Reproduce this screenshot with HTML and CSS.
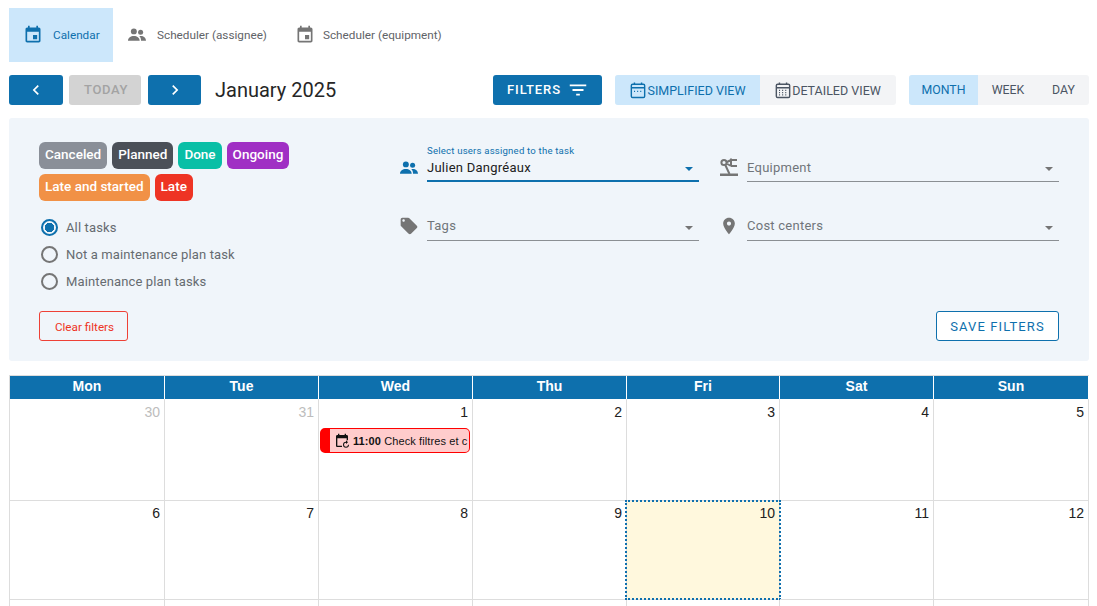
FILE: index.html
```html
<!DOCTYPE html>
<html lang="en">
<head>
<meta charset="utf-8">
<title>Calendar</title>
<link rel="stylesheet" href="styles.css">
</head>
<body>
<nav class="tabs">
  <a class="tab active"><svg class="tab-icon" viewBox="0 0 24 24"><path d="M19 3h-1V1h-2v2H8V1H6v2H5c-1.100 0-2 .9-2 2v14c0 1.100.9 2 2 2h14c1.100 0 2-.9 2-2V5c0-1.100-.9-2-2-2zm0 16H5V8h14v11zm-7-7h5v5h-5z"/></svg><span>Calendar</span></a>
  <a class="tab second"><svg class="tab-icon" viewBox="0 0 20 20"><circle cx="6.500" cy="6" r="3.300"/><circle cx="14" cy="7" r="2.800"/><path d="M0 16.500c0-3.500 3-5.500 6.500-5.500s6.500 2 6.500 5.500zM14.500 16.500c0-2.200-.6-4-2-5 3.500-1 7.500.8 7.500 5z"/></svg><span>Scheduler (assignee)</span></a>
  <a class="tab third"><svg class="tab-icon" viewBox="0 0 24 24"><path d="M19 3h-1V1h-2v2H8V1H6v2H5c-1.100 0-2 .9-2 2v14c0 1.100.9 2 2 2h14c1.100 0 2-.9 2-2V5c0-1.100-.9-2-2-2zm0 16H5V8h14v11zm-7-7h5v5h-5z"/></svg><span>Scheduler (equipment)</span></a>
</nav>

<div class="toolbar">
  <button class="btn nav-btn"><svg viewBox="0 0 24 24"><path d="M15.400 7.400 14 6l-6 6 6 6 1.400-1.400L10.800 12z"/></svg></button>
  <button class="btn today">TODAY</button>
  <button class="btn nav-btn next"><svg viewBox="0 0 24 24"><path d="M10 6 8.600 7.400 13.200 12l-4.600 4.600L10 18l6-6z"/></svg></button>
  <h1 class="month-title">January 2025</h1>
  <button class="btn filters">FILTERS<svg viewBox="0 0 24 24"><path d="M10 18h4v-2h-4v2zM3 6v2h18V6H3zm3 7h12v-2H6v2z"/></svg></button>
  <div class="segment view-seg">
    <a class="seg on simplified"><svg viewBox="0 0 18 20" class="cal-svg"><rect x="1.500" y="3.500" width="15" height="15" rx="1.500"/><path d="M1.500 7.500h15M5 1.500v3M13 1.500v3"/><path class="dots" d="M4.500 11.500h2M8 11.500h2M11.500 11.500h2"/></svg>SIMPLIFIED VIEW</a>
    <a class="seg detailed"><svg viewBox="0 0 18 20" class="cal-svg"><rect x="1.500" y="3.500" width="15" height="15" rx="1.500"/><path d="M1.500 7.500h15M5 1.500v3M13 1.500v3"/><path class="dots" d="M4.500 10.500h2M8 10.500h2M11.500 10.500h2M4.500 13h2M8 13h2M11.500 13h2M4.500 15.500h2M8 15.500h2M11.500 15.500h2"/></svg>DETAILED VIEW</a>
  </div>
  <div class="segment range-seg">
    <a class="seg on month">MONTH</a>
    <a class="seg week">WEEK</a>
    <a class="seg day">DAY</a>
  </div>
</div>

<section class="panel">
  <div class="panel-top">
    <div class="panel-left">
      <div class="chips">
        <span class="chip canceled">Canceled</span>
        <span class="chip planned">Planned</span>
        <span class="chip done">Done</span>
        <span class="chip ongoing">Ongoing</span>
        <span class="chip started">Late and started</span>
        <span class="chip late">Late</span>
      </div>
      <div class="radios">
        <label class="radio checked"><i></i>All tasks</label>
        <label class="radio"><i></i>Not a maintenance plan task</label>
        <label class="radio"><i></i>Maintenance plan tasks</label>
      </div>
    </div>
    <div class="fields">
      <div class="field">
        <svg class="field-icon blue" viewBox="0 0 20 20"><circle cx="6.500" cy="6" r="3.300"/><circle cx="14" cy="7" r="2.800"/><path d="M0 16.500c0-3.500 3-5.500 6.500-5.500s6.500 2 6.500 5.500zM14.500 16.500c0-2.200-.6-4-2-5 3.500-1 7.500.8 7.500 5z"/></svg>
        <div class="select focused"><small>Select users assigned to the task</small><span>Julien Dangréaux</span><b></b></div>
      </div>
      <div class="field">
        <svg class="field-icon robot" viewBox="0 0 20 20"><path class="robot-fill" d="M1 16.500h18V19H1z"/><circle cx="5" cy="5.500" r="2.600"/><path d="M10.500 17 6.300 8M7 5.500l5-2.500M7.500 6.500l4.500 2.500M12 3V1.500M12 3h6M12 9h6M12 3v6"/></svg>
        <div class="select"><span>Equipment</span><b></b></div>
      </div>
      <div class="field lower">
        <svg class="field-icon" viewBox="0 0 24 24"><path d="M21.410 11.580l-9-9C12.050 2.220 11.550 2 11 2H4c-1.100 0-2 .9-2 2v7c0 .55.22 1.050.59 1.420l9 9c.36.36.86.58 1.410.58.55 0 1.050-.22 1.410-.59l7-7c.37-.36.59-.86.59-1.410 0-.55-.23-1.060-.59-1.420zM5.500 7C4.670 7 4 6.330 4 5.500S4.670 4 5.500 4 7 4.670 7 5.500 6.330 7 5.500 7z"/></svg>
        <div class="select"><span>Tags</span><b></b></div>
      </div>
      <div class="field lower">
        <svg class="field-icon" viewBox="0 0 24 24"><path d="M12 2C8.130 2 5 5.130 5 9c0 5.250 7 13 7 13s7-7.750 7-13c0-3.870-3.130-7-7-7zm0 9.500c-1.380 0-2.500-1.120-2.500-2.500s1.120-2.500 2.500-2.500 2.500 1.120 2.500 2.500-1.120 2.500-2.500 2.500z"/></svg>
        <div class="select"><span>Cost centers</span><b></b></div>
      </div>
    </div>
  </div>
  <div class="panel-actions">
    <button class="clear">Clear filters</button>
    <button class="save">SAVE FILTERS</button>
  </div>
</section>

<div class="calendar">
  <div class="head">Mon</div><div class="head">Tue</div><div class="head">Wed</div><div class="head">Thu</div><div class="head">Fri</div><div class="head">Sat</div><div class="head">Sun</div>
  <div class="cell muted">30</div>
  <div class="cell muted">31</div>
  <div class="cell">1
    <div class="event"><svg viewBox="0 0 24 24"><path d="M19 3h-1V1h-2v2H8V1H6v2H5c-1.100 0-2 .9-2 2v14c0 1.100.9 2 2 2h7v-2H5V8h14v3h2V5c0-1.100-.9-2-2-2z"/><path d="M18 13a4.500 4.500 0 1 0 4.500 4.500h-1.500a3 3 0 1 1-3-3v2l3-2.700-3-2.800z"/></svg><span class="event-text"><strong>11:00</strong> Check filtres et c</span></div>
  </div>
  <div class="cell">2</div><div class="cell">3</div><div class="cell">4</div><div class="cell">5</div>
  <div class="cell wk2">6</div><div class="cell wk2">7</div><div class="cell wk2">8</div><div class="cell wk2">9</div>
  <div class="cell wk2 current">10</div>
  <div class="cell wk2">11</div><div class="cell wk2">12</div>
  <div class="cell stub"></div><div class="cell stub"></div><div class="cell stub"></div><div class="cell stub"></div><div class="cell stub"></div><div class="cell stub"></div><div class="cell stub"></div>
</div>
</body>
</html>
```

FILE: styles.css
```css
* { box-sizing: border-box; }
html, body { height: 100%; overflow: hidden; }
body {
  margin: 0;
  padding: 8px 8px 0 9px;
  background: #fff;
  font-family: Roboto, "Liberation Sans", sans-serif;
  color: #212121;
}
button { font-family: inherit; border: 0; cursor: pointer; }
svg { display: block; flex: none; fill: currentColor; }

/* Tabs */
.tabs { display: flex; height: 54px; }
.tab {
  display: flex;
  align-items: center;
  height: 54px;
  font-size: 11.750px;
  color: #5f6368;
  white-space: nowrap;
}
.tab.active { width: 104px; padding-left: 14px; background: #cce7fb; color: #0e70ad; }
.tab-icon { width: 20px; height: 20px; margin-right: 10px; }
.tab.second { padding-left: 15px; }
.tab.second .tab-icon { margin-right: 11px; width: 18px; height: 18px; }
.tab.third { padding-left: 28px; }
.tab.third .tab-icon { margin-right: 8px; }
.tab.second .tab-icon, .tab.third .tab-icon { color: #757575; }

/* Toolbar */
.toolbar { display: flex; align-items: center; height: 30px; margin-top: 13px; }
.btn { height: 30px; border-radius: 3px; }
.nav-btn { width: 54px; background: #0e70ad; color: #fff; display: flex; align-items: center; justify-content: center; padding: 0; }
.nav-btn svg { width: 20px; height: 20px; }
.nav-btn.next { width: 53px; }
.today {
  width: 72px;
  margin: 0 7px 0 6px;
  padding: 0 0 1px 2px;
  background: #d3d3d3;
  color: #a3a3a3;
  font-size: 13px;
  font-weight: 500;
  letter-spacing: .6px;
}
.month-title {
  margin: 0 0 0 14px;
  width: 278px;
  font-size: 20px;
  line-height: 30px;
  font-weight: 400;
  color: #262626;
  white-space: nowrap;
}
.filters {
  display: flex;
  align-items: center;
  width: 109px;
  padding: 0 0 2px 14px;
  background: #0e70ad;
  color: #fff;
  font-size: 13px;
  font-weight: 500;
  letter-spacing: .9px;
}
.filters svg { width: 22px; height: 22px; margin-left: 6px; margin-top: 2px; }
.segment { display: flex; height: 30px; background: #f3f4f6; border-radius: 3px; overflow: hidden; }
.view-seg { margin-left: 13px; width: 281px; }
.range-seg { margin-left: 13px; width: 180px; }
.seg {
  display: flex;
  align-items: center;
  justify-content: center;
  font-size: 12.500px;
  color: #4b5563;
  white-space: nowrap;
}
.range-seg .seg { font-size: 12.300px; }
.seg.on { background: #cce7fb; color: #0e70ad; }
.simplified { width: 145px; padding-left: 1px; }
.detailed { width: 136px; }
.month { width: 69px; }
.week { width: 60px; }
.day { width: 51px; }
.cal-svg { width: 16px; height: 20px; margin-right: 1px; fill: none; stroke: currentColor; stroke-width: 1.600; }
.cal-svg .dots { stroke-width: 1.300; stroke-dasharray: 1.200 .8; }

/* Filter panel */
.panel {
  display: flex;
  flex-direction: column;
  justify-content: space-between;
  height: 243px;
  margin-top: 13px;
  padding: 24px 30px 20px;
  background: #f0f5fa;
  border-radius: 3px;
}
.panel-top { display: flex; }
.panel-left { width: 360px; flex: none; }
.chips { display: flex; flex-wrap: wrap; gap: 5px; width: 260px; }
.chip {
  height: 27px;
  padding: 0 6px;
  border-radius: 6px;
  color: #fff;
  font-size: 13.500px;
  font-weight: 500;
  line-height: 25px;
  white-space: nowrap;
}
.canceled { background: #8a8f98; }
.planned { background: #4b5058; }
.done { background: #09bfa6; }
.ongoing { background: #a02fc4; }
.started { background: #f19146; }
.late { background: #ee3424; }

.radios { display: flex; flex-direction: column; margin-top: 17px; gap: 9px; }
.radio { display: flex; align-items: center; height: 18px; font-size: 13px; color: #666b70; white-space: nowrap; letter-spacing: .13px; }
.radio i { width: 17px; height: 17px; margin: 0 8px 0 2px; border: 2px solid #757575; border-radius: 50%; flex: none; }
.radio.checked i { border-color: #0e70ad; background: radial-gradient(circle, #0e70ad 0 4.500px, transparent 5px); }

.fields { display: grid; grid-template-columns: 320px 340px; grid-template-rows: 40px 59px; align-content: start; }
.field { display: flex; align-items: flex-end; }
.field-icon { width: 20px; height: 20px; margin: 0 8px 2px 0; color: #757575; position: relative; top: -3px; }
.field-icon.blue { width: 18px; height: 18px; margin: 0 9px 2px 1px; color: #0e70ad; }
.field-icon.robot { fill: none; stroke: currentColor; stroke-width: 2; }
.robot-fill { fill: currentColor; stroke: none; }
.select {
  position: relative;
  width: 272px;
  height: 27px;
  border-bottom: 1px solid #8b8f93;
  font-size: 13px;
  color: #70757a;
  letter-spacing: .25px;
}
.select span { display: block; line-height: 26px; }
.lower .select span { line-height: 24px; }
.select b {
  position: absolute;
  right: 6px;
  top: 12px;
  border: 4px solid transparent;
  border-top-color: #757575;
  border-bottom: 0;
}
.field:nth-child(even) .select { width: 312px; }
.select.focused { border-bottom: 2px solid #0e70ad; color: #212121; }
.select.focused b { border-top-color: #0e70ad; }
.select small {
  position: absolute;
  left: 0;
  top: -10px;
  font-size: 9.600px;
  line-height: 12px;
  letter-spacing: .2px;
  color: #0e70ad;
}

.panel-actions { display: flex; justify-content: space-between; align-items: flex-end; }
.clear {
  width: 89px;
  height: 30px;
  padding: 1px 0 0 2px;
  background: transparent;
  border: 1px solid #ee4136;
  border-radius: 3px;
  color: #ee3424;
  font-size: 11.700px;
}
.save {
  width: 123px;
  height: 30px;
  padding: 0;
  background: #fff;
  border: 1px solid #0e70ad;
  border-radius: 3px;
  color: #0e70ad;
  font-size: 13px;
  font-weight: 400;
  letter-spacing: 1.100px;
}

/* Calendar */
.calendar {
  display: grid;
  grid-template-columns: 155px 154px 154px 154px 153px 154px 155px;
  grid-template-rows: 23px 102px 99px 6px;
  width: 1080px;
  margin-top: 14px;
  border-top: 1px solid #ddd;
  border-left: 1px solid #ddd;
}
.head {
  background: #0e70ad;
  color: #fff;
  font-size: 14px;
  font-weight: 700;
  line-height: 21px;
  text-align: center;
  border-right: 1px solid #fff;
  font-family: "Liberation Sans", Arial, sans-serif;
}
.cell {
  position: relative;
  padding: 4px 4px 0 0;
  border-right: 1px solid #ddd;
  border-bottom: 1px solid #ddd;
  font-family: "Liberation Sans", Arial, sans-serif;
  font-size: 14px;
  line-height: 18px;
  text-align: right;
  color: #212121;
}
.cell.wk2 { padding-top: 3px; }
.cell.muted { color: #bdbdbd; }
.cell.stub { border-bottom: 0; }
.cell.current { background: #fff8dd; }
.cell.current::after {
  content: "";
  position: absolute;
  top: -1px;
  right: -2px;
  bottom: -1px;
  left: -2px;
  border: 2px dotted #0e70ad;
}
.event {
  display: flex;
  align-items: center;
  height: 25px;
  margin: 7px -2px 0 1px;
  padding: 0 2px 0 4px;
  background: #ffcccc;
  border: 1px solid #ff0000;
  border-left: 10px solid #ff0000;
  border-radius: 5px;
  overflow: hidden;
  color: #111;
  font-size: 11px;
  text-align: left;
  white-space: nowrap;
}
.event svg { width: 16px; height: 16px; margin-right: 3px; }
.event-text { line-height: 14px; letter-spacing: .1px; }
```
